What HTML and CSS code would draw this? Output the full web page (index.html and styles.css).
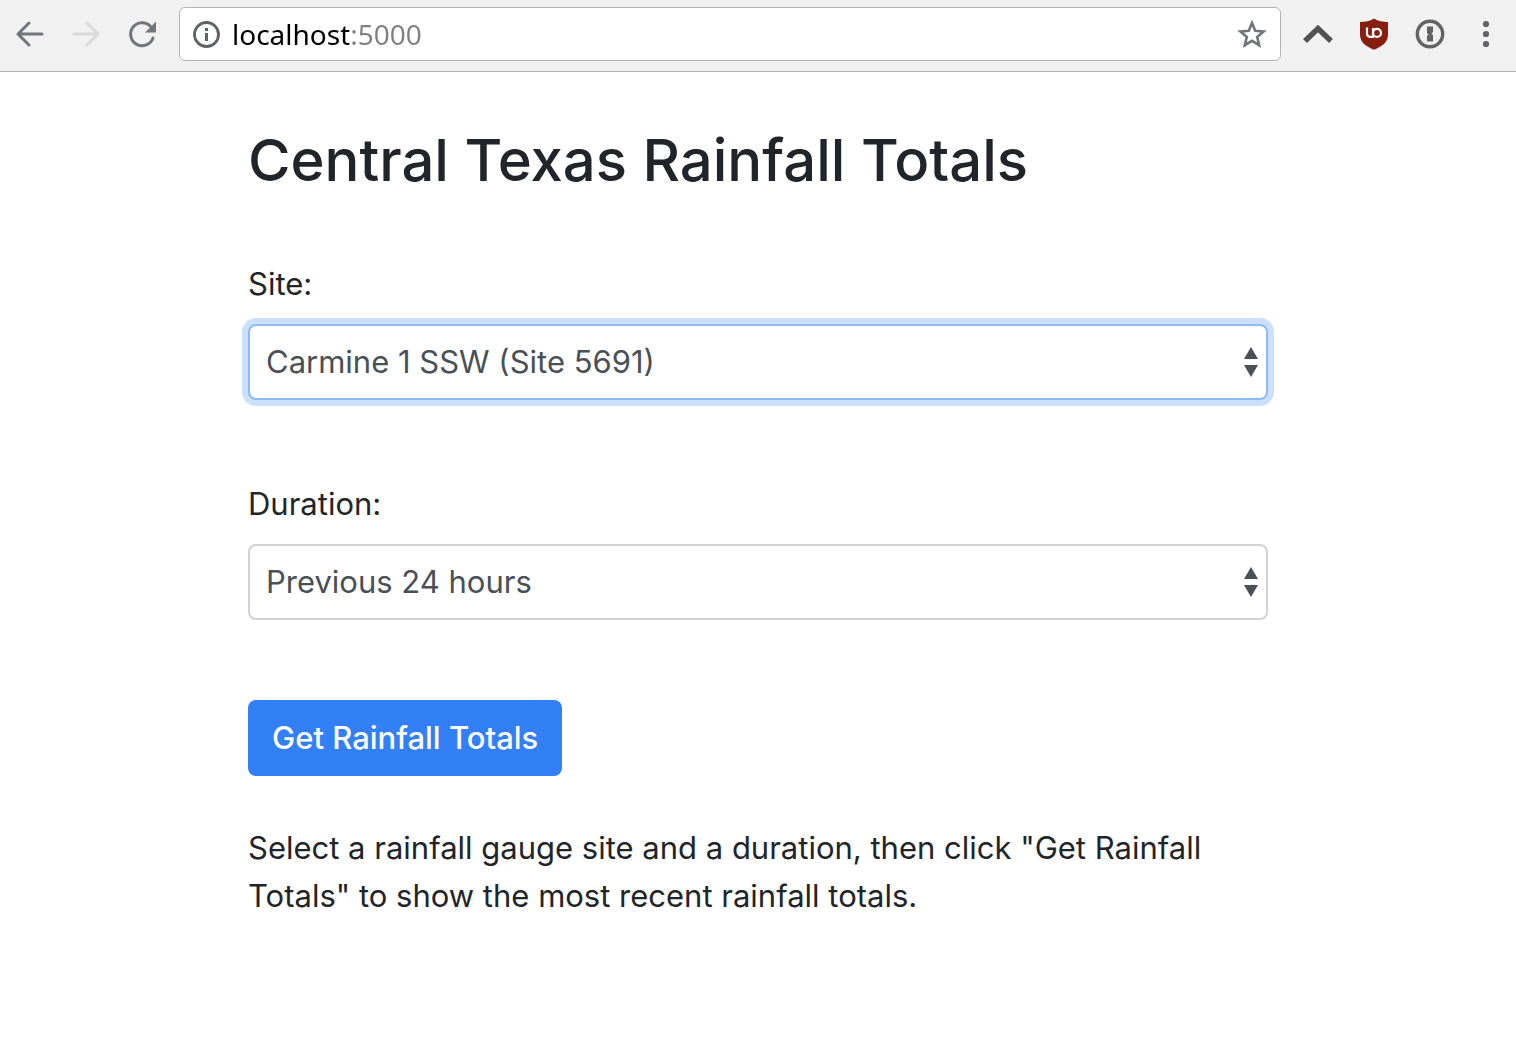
FILE: index.html
```html
<!DOCTYPE html>
<html lang="en">
<head>
<meta charset="utf-8">
<meta name="viewport" content="width=device-width, initial-scale=1">
<title>Central Texas Rainfall Totals</title>
<link rel="stylesheet" href="styles.css">
</head>
<body>
<header class="toolbar">
  <nav class="nav-buttons" aria-label="History">
    <button class="icon-button" type="button" aria-label="Back">
      <svg class="icon" viewBox="0 0 32 32"><path d="M28 16H4M15 5L4 16l11 11" fill="none" stroke="#72767b" stroke-width="3" stroke-linecap="round" stroke-linejoin="round"/></svg>
    </button>
    <button class="icon-button" type="button" aria-label="Forward" disabled>
      <svg class="icon" viewBox="0 0 32 32"><path d="M4 16h24M17 5l11 11-11 11" fill="none" stroke="#dadada" stroke-width="3" stroke-linecap="round" stroke-linejoin="round"/></svg>
    </button>
    <button class="icon-button" type="button" aria-label="Reload">
      <svg class="icon" viewBox="0 0 32 32"><path d="M27 20A11.500 11.500 0 1 1 24.500 8.300" fill="none" stroke="#72767b" stroke-width="3" stroke-linecap="round"/><path d="M30 3.500V14.500H19z" fill="#72767b"/></svg>
    </button>
  </nav>
  <div class="address">
    <svg class="icon" viewBox="0 0 32 32"><circle cx="16.500" cy="16.500" r="12" fill="none" stroke="#5f6368" stroke-width="2.800"/><path d="M15 10h3v3h-3zM15 15h3v8h-3z" fill="#5f6368"/></svg>
    <input class="address-input" type="text" aria-label="Address" value="localhost:5000">
    <button class="icon-button" type="button" aria-label="Bookmark this page">
      <svg class="icon" viewBox="0 0 32 32"><path fill="none" stroke="#72767b" stroke-width="2.600" d="M16 5l3.200 7.800 8.400.7-6.400 5.500 2 8.200-7.200-4.400-7.200 4.400 2-8.200-6.400-5.500 8.400-.7z"/></svg>
    </button>
  </div>
  <div class="extensions">
    <button class="icon-button" type="button" aria-label="Collapse">
      <svg class="icon" viewBox="0 0 32 32"><path d="M3 23L16 10.500 29 23" fill="none" stroke="#525252" stroke-width="5.500"/></svg>
    </button>
    <button class="icon-button" type="button" aria-label="uBlock Origin">
      <svg class="icon" viewBox="0 0 32 32"><path d="M16 .5c4 2.700 9 3.500 14 3.500v12.500c0 8-6 12-14 15.200C8 28.500 2 24.500 2 16.500V4c5 0 10-.8 14-3.500z" fill="#861f10"/><path d="M9 9.500v6.200a3.200 3.200 0 0 0 3.200 3.200h2.800V10" fill="none" stroke="#fff" stroke-width="2.200"/><circle cx="19" cy="14.900" r="4" fill="none" stroke="#fff" stroke-width="2.200"/></svg>
    </button>
    <button class="icon-button" type="button" aria-label="1Password">
      <svg class="icon" viewBox="0 0 32 32"><circle cx="16" cy="16" r="12.700" fill="none" stroke="#636363" stroke-width="3.400"/><path d="M13 8.500h6v5.500l-1.500 1.500 1.500 1.500v6.500h-6v-5.500l1.500-1.500-1.500-1.500z" fill="#636363"/></svg>
    </button>
    <button class="icon-button" type="button" aria-label="Menu">
      <svg class="icon" viewBox="0 0 32 32" fill="#5f6368"><circle cx="16" cy="6" r="3.100"/><circle cx="16" cy="16" r="3.100"/><circle cx="16" cy="26" r="3.100"/></svg>
    </button>
  </div>
</header>
<main class="container">
  <h1 class="title">Central Texas Rainfall Totals</h1>
  <form class="form">
    <div class="field">
      <label for="site">Site:</label>
      <div class="select-wrap">
        <select class="select select-active" id="site"><option>Carmine 1 SSW (Site 5691)</option></select>
        <svg class="arrows" viewBox="0 0 14 30" fill="#495057"><path d="M0 12L7 0l7 12zM0 18h14L7 30z"/></svg>
      </div>
    </div>
    <div class="field">
      <label for="duration">Duration:</label>
      <div class="select-wrap">
        <select class="select" id="duration"><option>Previous 24 hours</option></select>
        <svg class="arrows" viewBox="0 0 14 30" fill="#495057"><path d="M0 12L7 0l7 12zM0 18h14L7 30z"/></svg>
      </div>
    </div>
    <button class="submit" type="button">Get Rainfall Totals</button>
  </form>
  <p class="help">Select a rainfall gauge site and a duration, then click "Get Rainfall Totals" to show the most recent rainfall totals.</p>
</main>
</body>
</html>
```
FILE: styles.css
```css
* {
  box-sizing: border-box;
}

body {
  margin: 0;
  background: #fff;
  color: #212529;
  font: 31px/48px Inter, "Liberation Sans", sans-serif;
}

.toolbar {
  display: flex;
  align-items: center;
  gap: 21px;
  padding: 7px 14px 10px;
  background: #f1f1f1;
  border-bottom: 1px solid #b4b4b4;
}

.nav-buttons,
.extensions {
  display: flex;
  gap: 24px;
}

.icon-button {
  display: flex;
  padding: 0;
  border: 0;
  background: none;
}

.icon {
  flex: none;
  display: block;
  width: 32px;
  height: 32px;
}

.address {
  flex: 1;
  display: flex;
  align-items: center;
  gap: 10px;
  height: 54px;
  padding: 0 12px 0 10px;
  border: 1px solid #b4b4b4;
  border-radius: 6px;
  background: #fff;
}

/* The host is black, the port after it grey. */
.address-input {
  flex: 1;
  min-width: 0;
  padding: 0;
  border: 0;
  outline: 0;
  font: 28px/40px "Noto Sans", sans-serif;
  color: #000;
  background: linear-gradient(to right, #000 117px, #808080 117px);
  background-clip: text;
  -webkit-text-fill-color: transparent;
}

.container {
  max-width: 1080px;
  margin: 0 auto;
  padding: 48px 30px;
}

.title {
  margin: 0 0 60px;
  font-size: 58px;
  line-height: 80px;
  font-weight: 500;
}

.field {
  margin-bottom: 80px;
}

label {
  display: block;
  margin-bottom: 16px;
}

.select-wrap {
  display: grid;
  align-items: center;
}

.select,
.arrows {
  grid-area: 1 / 1;
}

.select {
  appearance: none;
  width: 100%;
  height: 76px;
  padding: 0 48px 0 16px;
  border: 2px solid #d0d2d5;
  border-radius: 8px;
  background: #fff;
  color: #495057;
  font: inherit;
}

.select-active,
.select:focus {
  outline: 0;
  border-color: #8bb9fa;
  box-shadow: 0 0 0 6px #cce0fe;
}

.arrows {
  justify-self: end;
  width: 14px;
  height: 30px;
  margin-right: 10px;
  pointer-events: none;
}

.submit {
  height: 76px;
  padding: 0 24px;
  border: 0;
  border-radius: 8px;
  background: #327ff6;
  color: #fff;
  font: inherit;
  font-weight: 500;
}

.help {
  margin: 48px 0 0;
}
```
